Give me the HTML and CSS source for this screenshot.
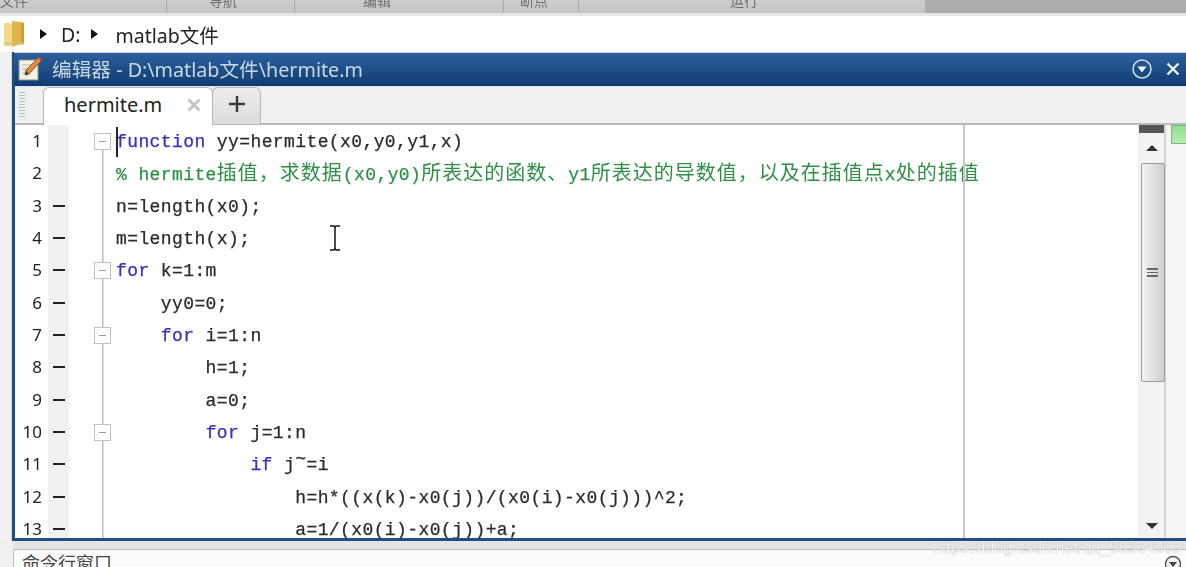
FILE: index.html
```html
<!DOCTYPE html>
<html lang="zh">
<head>
<meta charset="utf-8">
<title>hermite.m</title>
<link rel="stylesheet" href="styles.css">
</head>
<body>
<div class="page">
  <div class="ribbon">
    <span class="rib rib-a">文件</span>
    <span class="rib rib-b">导航</span>
    <span class="rib rib-c">编辑</span>
    <span class="rib rib-d">断点</span>
    <span class="rib rib-e">运行</span>
    <span class="rib-dark"></span>
  </div>
  <div class="address">
    <svg class="folder" width="22" height="28" viewBox="0 0 22 28"><path d="M1 3h6l2 2v21H2a1 1 0 0 1-1-1z" fill="#f3d98a"/><path d="M9 1l9 1v22l-9 3z" fill="#e0b44a"/><path d="M18 2l3 1v21l-3 0z" fill="#c99f3a"/><path d="M1 22h20v3H1z" fill="#dcc37a" opacity=".6"/></svg>
    <span class="crumb-arrow arrow-one"></span>
    <span class="crumb">D:</span>
    <span class="crumb-arrow arrow-two"></span>
    <span class="crumb">matlab文件</span>
  </div>
  <div class="workspace">
    <div class="leftstrip"></div>
    <div class="window">
      <div class="titlebar">
        <svg class="pencil" width="25" height="25" viewBox="0 0 25 25"><rect x="1" y="4" width="19" height="20" fill="#f4f1e6" stroke="#8c8c84"/><path d="M4 9h11M4 13h8M4 17h6" stroke="#b5b5ab"/><path d="M7 19l1-5L21 1l3 3L11 18z" fill="#e08a3c" stroke="#7d4a20" stroke-width=".8"/><path d="M20 2l3 3 1-1-3-3z" fill="#d8453a"/><path d="M7 19l1-4 3 3z" fill="#3a3a3a"/></svg>
        <span class="title-text">编辑器 - D:\matlab文件\hermite.m</span>
        <svg class="tb-menu" width="22" height="22" viewBox="0 0 22 22"><circle cx="11" cy="11" r="9" fill="none" stroke="#cfdcea" stroke-width="1.5"/><path d="M6.5 8.5h9L11 14.5z" fill="#eef3f8"/></svg>
        <svg class="tb-close" width="16" height="16" viewBox="0 0 16 16"><path d="M2.5 2.5l11 11M13.5 2.5l-11 11" stroke="#f2f5f8" stroke-width="2.4"/></svg>
      </div>
      <div class="tabbar">
        <span class="grip"></span>
        <div class="tab tab-active">
          <span class="tab-name">hermite.m</span>
          <svg class="tab-x" width="16" height="16" viewBox="0 0 16 16"><path d="M2.5 2.5l11 11M13.5 2.5l-11 11" stroke="#c4c6c6" stroke-width="3"/></svg>
        </div>
        <div class="tab tab-add">
          <svg width="16" height="16" viewBox="0 0 16 16"><path d="M8 0v16M0 8h16" stroke="#3a3a3a" stroke-width="2.4"/></svg>
        </div>
      </div>
      <div class="editor">
        <div class="rows">
          <div class="row"><span class="num">1</span><span class="bp"></span><span class="fold fold-first"><i class="box"></i></span><span class="code"><b class="kw">function</b> yy=hermite(x0,y0,y1,x)<i class="caret"></i></span></div>
          <div class="row"><span class="num">2</span><span class="bp"></span><span class="fold"></span><span class="code cm">% hermite<span class="zh">插值，求数据</span>(x0,y0)<span class="zh">所表达的函数、</span>y1<span class="zh">所表达的导数值，以及在插值点</span>x<span class="zh">处的插值</span></span></div>
          <div class="row"><span class="num">3</span><span class="bp on"></span><span class="fold"></span><span class="code">n=length(x0);</span></div>
          <div class="row"><span class="num">4</span><span class="bp on"></span><span class="fold"></span><span class="code">m=length(x);</span></div>
          <div class="row"><span class="num">5</span><span class="bp on"></span><span class="fold"><i class="box"></i></span><span class="code"><b class="kw">for</b> k=1:m</span></div>
          <div class="row"><span class="num">6</span><span class="bp on"></span><span class="fold"></span><span class="code">    yy0=0;</span></div>
          <div class="row"><span class="num">7</span><span class="bp on"></span><span class="fold"><i class="box"></i></span><span class="code">    <b class="kw">for</b> i=1:n</span></div>
          <div class="row"><span class="num">8</span><span class="bp on"></span><span class="fold"></span><span class="code">        h=1;</span></div>
          <div class="row"><span class="num">9</span><span class="bp on"></span><span class="fold"></span><span class="code">        a=0;</span></div>
          <div class="row"><span class="num">10</span><span class="bp on"></span><span class="fold"><i class="box"></i></span><span class="code">        <b class="kw">for</b> j=1:n</span></div>
          <div class="row"><span class="num">11</span><span class="bp on"></span><span class="fold"></span><span class="code">            <b class="kw">if</b> j<span class="tilde">~</span>=i</span></div>
          <div class="row"><span class="num">12</span><span class="bp on"></span><span class="fold"></span><span class="code">                h=h*((x(k)-x0(j))/(x0(i)-x0(j)))^2;</span></div>
          <div class="row"><span class="num">13</span><span class="bp on"></span><span class="fold"></span><span class="code">                a=1/(x0(i)-x0(j))+a;</span></div>
          <span class="margin-line"></span>
          <svg class="ibeam" width="14" height="26" viewBox="0 0 14 26"><path d="M2 1h3.5q1.500 0 1.500 2v20q0 2-1.500 2H2M12 1H8.500Q7 1 7 3v20q0 2 1.500 2H12" fill="none" stroke="#111" stroke-width="1.500"/></svg>
        </div>
        <div class="scrollbar">
          <span class="sb-cap"></span>
          <span class="sb-up"></span>
          <div class="sb-thumb"><i></i><i></i><i></i></div>
          <span class="sb-spacer"></span>
          <span class="sb-down"></span>
        </div>
        <div class="rightstrip"><span class="green"></span></div>
      </div>
    </div>
  </div>
  <div class="cmd">
    <div class="cmd-gap"></div>
    <div class="cmd-head">
      <span class="cmd-title">命令行窗口</span>
      <svg class="cmd-menu" width="18" height="18" viewBox="0 0 18 18"><circle cx="9" cy="9" r="7.500" fill="#f4f4f4" stroke="#555" stroke-width="1.400"/><path d="M5 7h8l-4 5z" fill="#444"/></svg>
    </div>
  </div>
  <span class="watermark">https://blog.csdn.net/qq_58564903</span>
</div>
</body>
</html>
```
FILE: styles.css
```css
* { box-sizing: border-box; }
html, body { margin: 0; padding: 0; background: #fff; }
.page {
  position: relative;
  width: 1186px;
  height: 567px;
  overflow: hidden;
  display: flex;
  flex-direction: column;
  font-family: "Noto Sans", "Noto Sans CJK SC", sans-serif;
  filter: blur(0.6px);
}
.ribbon {
  position: relative;
  flex: none;
  height: 16px;
  background: linear-gradient(#cdcdcd, #c4c4c4);
  border-bottom: 3px solid;
  border-image: linear-gradient(#8f8f8f 33%, #e6e6e6 33%) 1;
  overflow: hidden;
  color: #6e6e6e;
  font-size: 14px;
  line-height: 14px;
}
.rib { position: absolute; top: -6px; padding: 0 8px; }
.rib-a { left: -8px; }
.rib-b { left: 201px; }
.rib-c { left: 355px; }
.rib-d { left: 512px; }
.rib-e { left: 722px; }
.ribbon::before {
  content: "";
  position: absolute;
  left: 166px; top: 0;
  width: 127px; height: 13px;
  border-left: 1px solid #aaa;
  border-right: 1px solid #aaa;
}
.ribbon::after {
  content: "";
  position: absolute;
  left: 503px; top: 0;
  width: 74px; height: 13px;
  border-left: 1px solid #aaa;
  border-right: 1px solid #aaa;
}
.rib-dark {
  position: absolute;
  left: 925px; right: 0; top: 0; bottom: 0;
  background: #adadad;
}
.address {
  flex: none;
  height: 36px;
  display: flex;
  align-items: center;
  background: #fff;
  padding-left: 3px;
  font-size: 19.5px;
  color: #222;
}
.folder { flex: none; margin-right: 15px; }
.crumb-arrow {
  flex: none;
  width: 0; height: 0;
  border-left: 7px solid #111;
  border-top: 5px solid transparent;
  border-bottom: 5px solid transparent;
}
.arrow-one { margin-right: 14px; }
.arrow-two { margin: 0 17px 0 11px; }
.workspace {
  flex: none;
  height: 489px;
  display: flex;
}
.leftstrip {
  flex: none;
  width: 12px;
  background: #f1f1f1;
  border-right: 1px solid #d6d6d6;
}
.window {
  flex: 1;
  min-width: 0;
  display: flex;
  flex-direction: column;
  border-left: 3px solid #1f4e82;
  border-bottom: 3px solid #1f4e82;
}
.titlebar {
  flex: none;
  height: 34px;
  margin-left: -1px;
  display: flex;
  align-items: center;
  background: linear-gradient(#2c5f9c, #0f3d72);
  border-top: 1px solid #c6d2df;
  padding: 0 0 2px 4px;
  color: #c9d7e6;
  font-size: 19.7px;
}
.pencil { flex: none; margin-right: 9px; }
.title-text { flex: 1; }
.tb-menu { flex: none; margin-right: 12px; }
.tb-close { flex: none; margin-right: 5px; }
.tabbar {
  flex: none;
  height: 39px;
  position: relative;
  display: flex;
  align-items: flex-end;
  background: #eff1f1;
  border-top: 1px solid #dfe3e6;
  border-bottom: 2px solid #b9b9b9;
  padding-left: 4px;
}
.grip {
  flex: none;
  width: 6px;
  height: 26px;
  align-self: center;
  margin-right: 18px;
  background: repeating-linear-gradient(#bdbdbd 0 1px, transparent 1px 3px);
}
.tab {
  flex: none;
  display: flex;
  align-items: center;
  border: 1px solid #b5b5b5;
  border-bottom: 0;
  border-radius: 6px 6px 0 0;
  padding-bottom: 4px;
}
.tab-active {
  width: 170px;
  height: 38px;
  margin-bottom: -2px;
  background: #fff;
  padding-left: 20px;
  color: #222;
  font-size: 20px;
  position: relative;
  z-index: 1;
}
.tab-name { flex: 1; }
.tab-x { flex: none; margin-right: 10px; }
.tab-add {
  width: 49px;
  height: 37px;
  margin: 0 0 -1px -1px;
  background: linear-gradient(#ececec, #dcdcdc);
  justify-content: center;
}
.editor {
  flex: 1;
  min-height: 0;
  display: flex;
  background: #fff;
}
.rows {
  position: relative;
  flex: 1;
  min-width: 0;
  overflow: hidden;
}
.row {
  display: flex;
  height: 32.33px;
  line-height: 32.33px;
}
.num {
  flex: none;
  width: 33px;
  padding-right: 6px;
  text-align: right;
  font-family: "Noto Sans", sans-serif;
  font-size: 17px;
  color: #222;
}
.bp {
  flex: none;
  width: 21px;
  background: #f1f1f1;
  display: flex;
  align-items: center;
  justify-content: center;
}
.bp.on::before {
  content: "";
  width: 12px;
  height: 2px;
  background: #222;
}
.fold {
  flex: none;
  width: 47px;
  display: flex;
  align-items: center;
  padding-left: 25px;
  background: linear-gradient(#bdbdbd, #bdbdbd) 32.5px 0 / 1.5px 100% no-repeat;
}
.fold-first { background-position: 32.5px 16px; }
.box {
  width: 17px;
  height: 17px;
  background: linear-gradient(#999, #999) center / 7px 1px no-repeat #fff;
  border: 1.5px solid #c2c2c2;
}
.code {
  position: relative;
  flex: 1;
  padding-top: 1px;
  white-space: pre;
  font-family: "Liberation Mono", "Noto Sans CJK SC", monospace;
  font-size: 18px;
  letter-spacing: 0.4px;
  -webkit-text-stroke: 0.25px currentColor;
  color: #2a2a2a;
}
.kw { font-weight: normal; color: #3a2cc0; }
.cm { color: #2f8f46; padding-top: 0; line-height: 29px; }
.zh {
  font-family: "Noto Sans CJK SC", sans-serif;
  font-size: 20px;
  letter-spacing: 1px;
  -webkit-text-stroke: 0;
}
.tilde {
  vertical-align: 6px;
  line-height: 0;
}
.caret {
  position: absolute;
  left: 0; top: 2px;
  width: 1.5px;
  height: 30px;
  background: #222;
}
.margin-line {
  position: absolute;
  left: 948px; top: 0; bottom: 0;
  width: 1.5px;
  background: #c8c8c8;
}
.ibeam {
  position: absolute;
  left: 313px;
  top: 100px;
}
.scrollbar {
  flex: none;
  width: 28px;
  display: flex;
  flex-direction: column;
  align-items: center;
  background: #f3f3f3;
  border-right: 2px solid #d4d4d4;
  border-left: 1px solid #eee;
}
.sb-cap { flex: none; width: 100%; height: 8px; background: #555; }
.sb-up {
  flex: none;
  width: 0; height: 0;
  margin: 12px 0 12px;
  border-bottom: 6px solid #333;
  border-left: 6px solid transparent;
  border-right: 6px solid transparent;
}
.sb-thumb {
  flex: none;
  width: 24px;
  height: 219px;
  margin-left: 2px;
  display: flex;
  flex-direction: column;
  justify-content: center;
  align-items: center;
  gap: 2px;
  background: linear-gradient(90deg, #f2f2f2, #cfcfcf);
  border: 1px solid #9a9a9a;
  border-radius: 2px;
}
.sb-thumb i { width: 11px; height: 1.5px; background: #666; }
.sb-spacer { flex: 1; }
.sb-down {
  flex: none;
  width: 0; height: 0;
  margin-bottom: 9px;
  border-top: 6px solid #333;
  border-left: 6px solid transparent;
  border-right: 6px solid transparent;
}
.rightstrip {
  flex: none;
  width: 20px;
  background: #f4f4f2;
  padding-left: 5px;
}
.green {
  display: block;
  width: 15px;
  height: 19px;
  background: linear-gradient(#8fe08f, #b7ebb0);
  border: 1px solid #7fb27f;
  border-right: 0;
}
.cmd {
  flex: 1;
  min-height: 0;
  padding-left: 13px;
  background: #f0f0f0;
}
.cmd-gap {
  height: 9px;
  background: #e4e4e4;
  border-bottom: 1px solid #b9b9b9;
}
.cmd-head {
  position: relative;
  height: 30px;
  display: flex;
  background: #fbfbfb;
  border-left: 1px solid #c0c0c0;
  padding-left: 8px;
  color: #444;
  font-size: 18px;
  line-height: 26px;
}
.cmd-title { flex: 1; }
.cmd-menu { flex: none; margin: 5px 4px 0 0; }
.watermark {
  position: absolute;
  left: 933px;
  top: 538px;
  color: rgba(255, 255, 255, 0.85);
  text-shadow: 0 0 1px rgba(120, 120, 120, 0.7);
  font-family: "Liberation Sans", sans-serif;
  font-size: 16.2px;
  white-space: nowrap;
}
```
